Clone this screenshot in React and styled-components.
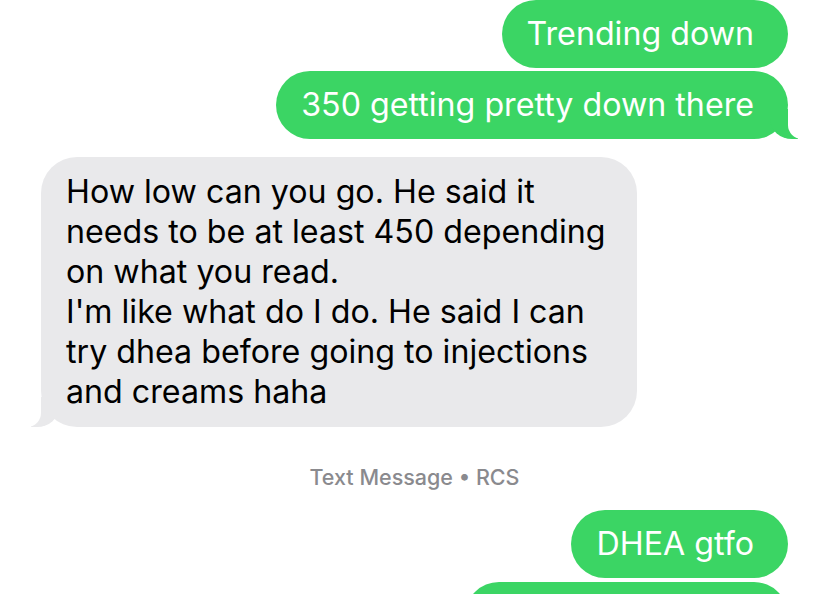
import React from 'react';
import styled, { createGlobalStyle } from 'styled-components';

const GlobalStyle = createGlobalStyle`
  html, body {
    margin: 0;
    padding: 0;
    background: #ffffff;
  }
  body {
    font-family: Inter, "Noto Sans", "Liberation Sans", sans-serif;
    -webkit-font-smoothing: antialiased;
  }
`;

const Thread = styled.div`
  width: 828px;
  height: 594px;
  box-sizing: border-box;
  padding: 0 40px 0 41px;
  display: flex;
  flex-direction: column;
  overflow: hidden;
  background: #ffffff;
`;

const Bubble = styled.div`
  position: relative;
  align-self: ${props => (props.$sent ? 'flex-end' : 'flex-start')};
  margin-top: ${props => props.$gap || '0px'};
  padding: ${props => (props.$sent ? '14px 34px 14px 25px' : '15px 31px 15px 25px')};
  border-radius: ${props => (props.$sent ? '34px' : '36px')};
  background: ${props => (props.$sent ? '#3bd564' : '#e9e9eb')};
  color: ${props => (props.$sent ? '#ffffff' : '#000000')};
  font-size: 32.2px;
  line-height: 40px;
  white-space: nowrap;
  flex-shrink: 0;

  &::before,
  &::after {
    content: ${props => (props.$tail ? '""' : 'none')};
    position: absolute;
    bottom: 0;
    height: 30px;
  }

  &::before {
    ${props => (props.$sent ? 'right: -10px;' : 'left: -10px;')}
    width: 28px;
    background: ${props => (props.$sent ? '#3bd564' : '#e9e9eb')};
    ${props => (props.$sent
      ? 'border-bottom-left-radius: 22px 20px;'
      : 'border-bottom-right-radius: 22px 20px;')}
  }

  &::after {
    ${props => (props.$sent ? 'right: -36px;' : 'left: -36px;')}
    width: 36px;
    background: #ffffff;
    ${props => (props.$sent
      ? 'border-bottom-left-radius: 14px;'
      : 'border-bottom-right-radius: 14px;')}
  }
`;

const Label = styled.div`
  margin-top: 38px;
  align-self: center;
  font-size: 21.5px;
  line-height: 24px;
  font-weight: 500;
  color: #8a8a8e;
`;

const lines = [
  'How low can you go. He said it',
  'needs to be at least 450 depending',
  'on what you read.',
  "I'm like what do I do. He said I can",
  'try dhea before going to injections',
  'and creams haha',
];

function App() {
  return (
    <>
      <GlobalStyle />
      <Thread>
        <Bubble $sent>Trending down</Bubble>
        <Bubble $sent $tail $gap="3px">350 getting pretty down there</Bubble>
        <Bubble $tail $gap="18px">
          {lines.map((line, i) => (
            <React.Fragment key={i}>
              {line}
              {i < lines.length - 1 && <br />}
            </React.Fragment>
          ))}
        </Bubble>
        <Label>Text Message • RCS</Label>
        <Bubble $sent $gap="21px">DHEA gtfo</Bubble>
        <Bubble $sent $tail $gap="4px">Yeah I'm not sure</Bubble>
      </Thread>
    </>
  );
}

export default App;
